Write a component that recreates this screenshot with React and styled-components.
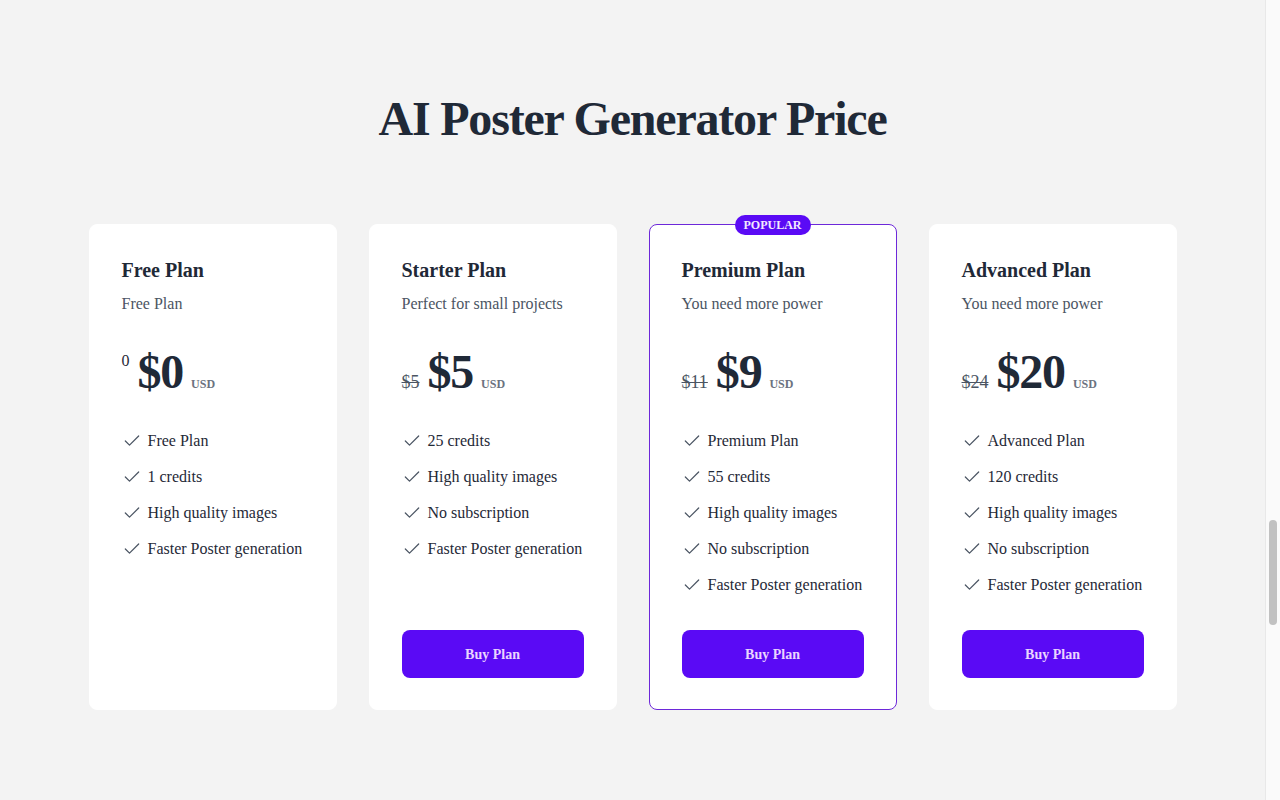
import React from 'react'
import styled, { createGlobalStyle } from 'styled-components'
import { Check } from 'lucide-react'

const GlobalStyle = createGlobalStyle`
  html, body {
    margin: 0;
    padding: 0;
    background: #f3f3f3;
    font-family: "Liberation Serif", "Times New Roman", serif;
    color: #1f2937;
    overflow: hidden;
  }
  * { box-sizing: border-box; }
`

const plans = [
  {
    name: 'Free Plan',
    description: 'Free Plan',
    original: '0',
    price: '$0',
    features: ['Free Plan', '1 credits', 'High quality images', 'Faster Poster generation'],
    free: true
  },
  {
    name: 'Starter Plan',
    description: 'Perfect for small projects',
    original: '$5',
    price: '$5',
    features: ['25 credits', 'High quality images', 'No subscription', 'Faster Poster generation']
  },
  {
    name: 'Premium Plan',
    description: 'You need more power',
    original: '$11',
    price: '$9',
    features: ['Premium Plan', '55 credits', 'High quality images', 'No subscription', 'Faster Poster generation'],
    popular: true
  },
  {
    name: 'Advanced Plan',
    description: 'You need more power',
    original: '$24',
    price: '$20',
    features: ['Advanced Plan', '120 credits', 'High quality images', 'No subscription', 'Faster Poster generation']
  }
]

const Page = styled.div`
  display: flex;
  height: 100vh;
`

const Main = styled.main`
  flex: 1;
  min-width: 0;
`

// stands in for the browser scrollbar seen in the screenshot
const ScrollTrack = styled.div`
  flex: none;
  width: 15px;
  height: 100vh;
  background: #fafafa;
  border-left: 1px solid #e8e8e8;
  padding: 520px 3px 0 3px;
`

const ScrollThumb = styled.div`
  height: 105px;
  border-radius: 4px;
  background: #c1c1c1;
`

const Section = styled.section`
  padding-top: 95px;
`

const Title = styled.h2`
  margin: 0 0 81px;
  text-align: center;
  font-size: 48px;
  line-height: 48px;
  font-weight: 700;
  letter-spacing: -0.025em;
  color: #1f2937;
`

const Grid = styled.div`
  width: 1088px;
  margin: 0 auto;
  display: grid;
  grid-template-columns: repeat(4, 1fr);
  gap: 32px;
`

const Card = styled.div`
  position: relative;
  display: flex;
  flex-direction: column;
  min-height: 486px;
  padding: 32px 32px 31px;
  background: #ffffff;
  border-radius: 8px;
  border: 1px solid ${p => (p.$popular ? '#6d28d9' : '#ffffff')};
`

const Badge = styled.span`
  position: absolute;
  top: -10px;
  left: 50%;
  transform: translateX(-50%);
  height: 20px;
  padding: 0 9px;
  display: flex;
  align-items: center;
  border-radius: 999px;
  background: #5a0af5;
  color: #f3e8ff;
  font-size: 12px;
  font-weight: 700;
  line-height: 1;
`

const PlanName = styled.h3`
  margin: -1px 0 0;
  font-size: 20px;
  line-height: 28px;
  font-weight: 700;
  color: #1f2937;
`

const PlanDescription = styled.p`
  margin: 8px 0 0;
  font-size: 16px;
  line-height: 24px;
  color: #4b5563;
`

const PriceRow = styled.div`
  margin-top: 32px;
  display: flex;
  align-items: baseline;
  gap: 8px;
`

const OriginalPrice = styled.span`
  font-size: ${p => (p.$free ? '16px' : '18px')};
  line-height: 1;
  text-decoration: ${p => (p.$free ? 'none' : 'line-through')};
  align-self: ${p => (p.$free ? 'flex-start' : 'auto')};
  margin-top: ${p => (p.$free ? '5px' : '0')};
  color: ${p => (p.$free ? '#1f2937' : '#4b5563')};
`

const Price = styled.span`
  font-size: 48px;
  line-height: 48px;
  font-weight: 700;
  letter-spacing: -0.025em;
  color: #1f2937;
`

const Currency = styled.span`
  font-size: 12px;
  font-weight: 700;
  color: #6b7280;
`

const Features = styled.ul`
  list-style: none;
  margin: 33px 0 0;
  padding: 0;
  display: flex;
  flex-direction: column;
  gap: 12px;
`

const Feature = styled.li`
  display: flex;
  align-items: center;
  gap: 6px;
  font-size: 16px;
  line-height: 24px;
  color: #1f2937;

  svg {
    flex: none;
    color: #4b5563;
  }
`

const ButtonSlot = styled.div`
  margin-top: auto;
  padding-top: 33px;
`

const BuyButton = styled.button`
  width: 100%;
  height: 48px;
  border: none;
  border-radius: 8px;
  background: #5a0af5;
  color: #e9d5ff;
  font-family: inherit;
  font-size: 14px;
  line-height: 48px;
  font-weight: 700;
  padding: 1px 0 0;
  cursor: pointer;
`

const PlanCard = ({ plan }) => (
  <Card $popular={plan.popular}>
    {plan.popular && <Badge>POPULAR</Badge>}
    <PlanName>{plan.name}</PlanName>
    <PlanDescription>{plan.description}</PlanDescription>
    <PriceRow>
      <OriginalPrice $free={plan.free}>{plan.original}</OriginalPrice>
      <Price>{plan.price}</Price>
      <Currency>USD</Currency>
    </PriceRow>
    <Features>
      {plan.features.map(f => (
        <Feature key={f}>
          <Check size={20} strokeWidth={1.5} />
          {f}
        </Feature>
      ))}
    </Features>
    {!plan.free && (
      <ButtonSlot>
        <BuyButton>Buy Plan</BuyButton>
      </ButtonSlot>
    )}
  </Card>
)

export default function App () {
  return (
    <>
      <GlobalStyle />
      <Page>
        <Main>
          <Section>
            <Title>AI Poster Generator Price</Title>
            <Grid>
              {plans.map(p => <PlanCard key={p.name} plan={p} />)}
            </Grid>
          </Section>
        </Main>
        <ScrollTrack>
          <ScrollThumb />
        </ScrollTrack>
      </Page>
    </>
  )
}
